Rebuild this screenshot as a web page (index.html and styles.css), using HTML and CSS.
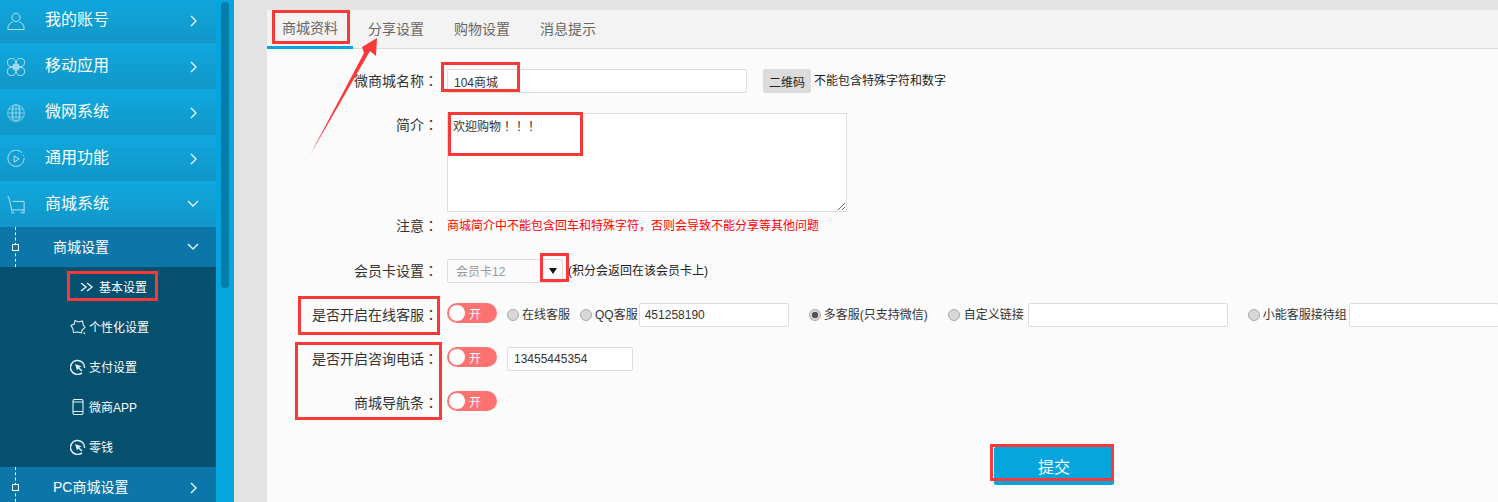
FILE: index.html
```html
<!DOCTYPE html>
<html lang="zh">
<head>
<meta charset="utf-8">
<title>商城设置</title>
<link rel="stylesheet" href="styles.css">
</head>
<body>
<div class="page">
  <aside class="sidebar">
    <nav class="menu">
      <div class="item">
        <svg class="ico" viewBox="0 0 20 20"><circle cx="10" cy="6" r="4.600"/><path d="M1 19.500v-1.500c0-4 3-6.200 5.500-7M19 19.500v-1.500c0-4-3-6.200-5.500-7M1 19.500h18"/></svg>
        <span class="label">我的账号</span>
        <svg class="chev" viewBox="0 0 10 12"><path d="M2 1l5 5-5 5"/></svg>
      </div>
      <div class="item">
        <svg class="ico" viewBox="0 0 20 20"><circle cx="5" cy="5" r="4.500"/><circle cx="15" cy="5" r="4.500"/><circle cx="5" cy="15" r="4.500"/><circle cx="15" cy="15" r="4.500"/><rect class="fillish" x="6.500" y="6.500" width="7" height="7"/></svg>
        <span class="label">移动应用</span>
        <svg class="chev" viewBox="0 0 10 12"><path d="M2 1l5 5-5 5"/></svg>
      </div>
      <div class="item">
        <svg class="ico ico-thin" viewBox="0 0 20 20"><circle cx="10" cy="10" r="9.300"/><ellipse cx="10" cy="10" rx="4.500" ry="9.300"/><path d="M10 1v18M1 10h18M2 5.500h16M2 14.500h16M6.500 1.800v16.400M13.500 1.800v16.400"/></svg>
        <span class="label">微网系统</span>
        <svg class="chev" viewBox="0 0 10 12"><path d="M2 1l5 5-5 5"/></svg>
      </div>
      <div class="item">
        <svg class="ico" viewBox="0 0 20 20"><path d="M16.500 3A9 9 0 1 0 19 9M18.500 6.500l-.5-1"/><path d="M8 6.500v7l5.500-3.500z"/></svg>
        <span class="label">通用功能</span>
        <svg class="chev" viewBox="0 0 10 12"><path d="M2 1l5 5-5 5"/></svg>
      </div>
      <div class="item">
        <svg class="ico" viewBox="0 0 20 20"><path d="M0.500 1h1.500l3.500 16M6 6h13v13M5.500 15.500h13.500M5 19.500l1.500-2 1.500 2M15.500 19.500l1.500-2 1.500 2"/></svg>
        <span class="label">商城系统</span>
        <svg class="chev chev-down" viewBox="0 0 12 10"><path d="M1 2l5 5 5-5"/></svg>
      </div>
      <div class="subhead">
        <span class="tree"><i class="node"></i></span>
        <span class="sub-label">商城设置</span>
        <svg class="chev chev-down" viewBox="0 0 12 10"><path d="M1 2l5 5 5-5"/></svg>
      </div>
      <ul class="subitems">
        <li class="subitem subitem-first">
          <svg class="sico sico-double" viewBox="0 0 14 10"><path d="M1 1l5 4-5 4M7 1l5 4-5 4"/></svg>
          <span>基本设置</span>
        </li>
        <li class="subitem">
          <svg class="sico" viewBox="0 0 16 16"><path d="M5 1.500l3.500 1.500 4-1 .8 4 1.700 2.500-3 2.500-.5 2.800-4-.8-4 .5L2.800 9.500 1 6.500l3.200-1.500zM13.500 13.500l1.500 1.500"/></svg>
          <span>个性化设置</span>
        </li>
        <li class="subitem">
          <svg class="sico sico-bold" viewBox="0 0 16 16"><path d="M12 13.800A7 7 0 1 1 14.500 9"/><path class="solid" d="M5 5l6.500 2.200-2.200 1.200 3.200 3.200-1 1-3.200-3.200-1.200 2.200z"/></svg>
          <span>支付设置</span>
        </li>
        <li class="subitem">
          <svg class="sico" viewBox="0 0 16 16"><rect x="3" y="0.500" width="10" height="15" rx="1.500"/><path d="M3 3h10M3 12.500h10"/></svg>
          <span>微商APP</span>
        </li>
        <li class="subitem">
          <svg class="sico sico-bold" viewBox="0 0 16 16"><path d="M12 13.800A7 7 0 1 1 14.500 9"/><path class="solid" d="M5 5l6.500 2.200-2.200 1.200 3.200 3.200-1 1-3.200-3.200-1.200 2.200z"/></svg>
          <span>零钱</span>
        </li>
      </ul>
      <div class="subhead">
        <span class="tree"><i class="node"></i></span>
        <span class="sub-label">PC商城设置</span>
        <svg class="chev" viewBox="0 0 10 12"><path d="M2 1l5 5-5 5"/></svg>
      </div>
    </nav>
    <div class="rail"><div class="thumb"></div></div>
  </aside>

  <main class="content">
    <div class="panel">
      <div class="tabs">
        <span class="tab tab-active">商城资料</span>
        <span class="tab">分享设置</span>
        <span class="tab">购物设置</span>
        <span class="tab">消息提示</span>
      </div>
      <form class="form">
        <div class="row row-name">
          <label class="flabel">微商城名称<span class="colon" lang="zh-Hant">：</span></label>
          <input class="text text-name" type="text" value="104商城">
          <span class="qr">二维码</span>
          <span class="hint">不能包含特殊字符和数字</span>
        </div>
        <div class="row row-intro">
          <label class="flabel">简介<span class="colon" lang="zh-Hant">：</span></label>
          <textarea class="area" lang="zh-Hant">欢迎购物！！！</textarea>
        </div>
        <div class="row row-note">
          <label class="flabel">注意<span class="colon" lang="zh-Hant">：</span></label>
          <span class="warn">商城简介中不能包含回车和特殊字符，否则会导致不能分享等其他问题</span>
        </div>
        <div class="row row-card">
          <label class="flabel">会员卡设置<span class="colon" lang="zh-Hant">：</span></label>
          <div class="select">会员卡12<span class="caret"></span></div>
          <span class="hint hint-card">(积分会返回在该会员卡上)</span>
        </div>
        <div class="row row-service">
          <label class="flabel">是否开启在线客服<span class="colon" lang="zh-Hant">：</span></label>
          <span class="switch"><i class="knob"></i>开</span>
          <input class="radio r1" type="radio" name="kf"><span class="opt o1">在线客服</span>
          <input class="radio r2" type="radio" name="kf"><span class="opt o2">QQ客服</span>
          <input class="text text-qq" type="text" value="451258190">
          <input class="radio r3" type="radio" name="kf" checked><span class="opt o3">多客服(只支持微信)</span>
          <input class="radio r4" type="radio" name="kf"><span class="opt o4">自定义链接</span>
          <input class="text text-link" type="text">
          <input class="radio r5" type="radio" name="kf"><span class="opt o5">小能客服接待组</span>
          <input class="text text-xn" type="text">
        </div>
        <div class="row row-phone">
          <label class="flabel">是否开启咨询电话<span class="colon" lang="zh-Hant">：</span></label>
          <span class="switch"><i class="knob"></i>开</span>
          <input class="text text-phone" type="text" value="13455445354">
        </div>
        <div class="row row-nav">
          <label class="flabel">商城导航条<span class="colon" lang="zh-Hant">：</span></label>
          <span class="switch"><i class="knob"></i>开</span>
        </div>
        <div class="actions"><button class="submit" type="button">提交</button></div>
      </form>
    </div>
  </main>

  <i class="mark mark-basic"></i>
  <i class="mark mark-tab"></i>
  <i class="mark mark-name"></i>
  <i class="mark mark-intro"></i>
  <i class="mark mark-caret"></i>
  <i class="mark mark-service"></i>
  <i class="mark mark-phone"></i>
  <i class="mark mark-submit"></i>
  <svg class="arrow" viewBox="0 0 1498 502"><polygon points="310,155 364,53 362,47 377,38 376,56 370,51"/></svg>
</div>
</body>
</html>
```
FILE: styles.css
```css
* { box-sizing: border-box; }
html, body { margin: 0; padding: 0; height: 100%; overflow: hidden; }
body { font-family: "Liberation Sans", "Noto Sans CJK SC", sans-serif; font-size: 12px; color: #222; background: #e3e3e3; }
.page { position: relative; display: flex; width: 1498px; height: 502px; overflow: hidden; }

/* sidebar */
.sidebar { display: flex; flex: 0 0 234px; height: 502px; background: #07a5de; }
.menu { flex: 0 0 216px; margin-top: -3px; background: #0c5a7d; }
.item { display: flex; align-items: center; height: 46px; background: linear-gradient(#10a8df, #1196c7); color: #fff; font-size: 16px; }
.ico { flex: 0 0 18px; width: 18px; height: 18px; margin-left: 7px; margin-top: 1px; fill: none; stroke: #b9e3f2; stroke-width: 1.1; }
.ico-thin { stroke-width: 0.7; }
.fillish { fill: #9fd8ec; stroke: none; }
.label { margin-left: 20px; flex: 1; padding-bottom: 4px; }
.chev { flex: 0 0 10px; width: 10px; height: 12px; margin-right: 17px; margin-top: 2px; fill: none; stroke: #eaf7fc; stroke-width: 1.4; }
.chev-down { flex: 0 0 12px; width: 12px; height: 10px; margin-right: 17px; margin-top: 0; }
.subhead { display: flex; align-items: center; height: 40px; background: #0d76a9; color: #fff; font-size: 14px; }
.tree { position: relative; flex: 0 0 53px; align-self: stretch; }
.tree::before { content: ""; position: absolute; left: 15px; top: 0; bottom: 0; border-left: 1px dashed #e6f4fa; }
.node { position: absolute; left: 12px; top: 17px; width: 7px; height: 7px; background: #0d76a9; border: 1px solid #fff; }
.sub-label { flex: 1; padding-bottom: 2px; }
.subitems { list-style: none; margin: 0; padding: 0; background: #05506e; color: #fff; }
.subitem { display: flex; align-items: center; height: 40px; padding-left: 70px; }
.subitem span { margin-left: 3px; padding-bottom: 2px; }
.subitem-first { padding-left: 80px; }
.subitem-first span { margin-left: 5px; }
.sico { flex: 0 0 16px; width: 16px; height: 16px; fill: none; stroke: #e3f1f6; stroke-width: 1.1; }
.sico-bold { stroke-width: 1.5; }
.sico-double { flex: 0 0 14px; width: 14px; height: 10px; stroke-width: 1.5; }
.solid { fill: #e3f1f6; stroke: none; }
.rail { flex: 0 0 18px; padding: 2px 5px 0; }
.thumb { width: 8px; height: 286px; background: #067ea9; border-radius: 4px; }

/* content */
.content { flex: 1; min-width: 0; padding: 10px 0 0 33px; }
.panel { height: 492px; background: #fbfbfb; width: 1300px; }
.tabs { display: flex; height: 39px; background: #f3f3f3; border-bottom: 1px solid #dcdcdc; }
.tab { display: flex; align-items: center; justify-content: center; width: 86px; height: 39px; padding-bottom: 3px; font-size: 14px; color: #666; }
.tab-active { border-bottom: 3px solid #07a5de; }
.form { padding-top: 20px; }
.row { display: flex; align-items: flex-start; height: 24px; margin-top: 20px; }
.row-name { margin-top: 0; }
.row-intro { height: 99px; }
.row-note { height: 18px; margin-top: 5px; line-height: 18px; }
.row-card { margin-top: 24px; }
.flabel { flex: 0 0 171px; margin-top: -1px; margin-right: 9px; text-align: right; font-size: 14px; line-height: 24px; color: #333; }
.colon { font-family: "Noto Sans CJK TC", sans-serif; }
.row-note .flabel { line-height: 18px; }
.text { min-width: 0; height: 24px; padding: 0 5px; border: 1px solid #ddd; border-radius: 2px; background: #fff; font: 12px "Liberation Sans", "Noto Sans CJK SC", sans-serif; color: #333; outline: none; }
.text-name { width: 300px; padding-left: 6px; }
.text-phone { padding-left: 6px; }
.qr { display: flex; align-items: center; justify-content: center; width: 48px; height: 24px; margin-left: 16px; background: #dcdcdc; border-radius: 2px; }
.hint { margin-left: 3px; line-height: 24px; color: #222; }
.area { display: block; width: 400px; height: 99px; padding: 3px 5px; border: 1px solid #ddd; background: #fff; font: 12px "Liberation Sans", "Noto Sans CJK TC", sans-serif; color: #333; outline: none; }
.warn { color: #f00; line-height: 18px; }
.select { position: relative; width: 116px; height: 24px; padding-left: 8px; border: 1px solid #ddd; border-radius: 2px; background: #fbfbfb; line-height: 24px; color: #999; }
.caret { position: absolute; right: 5px; top: 8px; border-style: solid; border-width: 6px 4px 0; border-color: #111 transparent transparent; }
.hint-card { margin-left: 5px; }

.switch { position: relative; display: flex; align-items: center; flex: 0 0 50px; height: 20px; padding-left: 22px; border-radius: 10px; background: #ff7272; color: #fff; font-size: 12px; }
.knob { position: absolute; left: 2px; top: 2px; width: 16px; height: 16px; border-radius: 50%; background: #fff; }

.radio { appearance: none; flex: 0 0 12px; width: 12px; height: 12px; margin: 6px 0 0; border: 1px solid #aaa; border-radius: 50%; background: #d8d8d8; }
.radio:checked { background: radial-gradient(circle, #555 0 3px, #d8d8d8 3.500px); }
.r1 { margin-left: 10px; }
.r2 { margin-left: 10px; }
.r3 { margin-left: 20px; }
.r4 { margin-left: 20px; }
.r5 { margin-left: 20px; }
.opt { line-height: 24px; margin-left: 3px; white-space: nowrap; color: #333; }
.o4 { margin-left: 4px; }
.text-qq { flex: 0 0 150px; width: 150px; margin-left: 1px; }
.text-link { flex: 0 0 200px; width: 200px; margin-left: 4px; }
.text-xn { flex: 0 0 150px; width: 150px; margin-left: 2px; }
.text-phone { width: 126px; margin-left: 10px; }
.actions { margin-top: 32px; padding-left: 727px; }
.submit { display: block; width: 120px; height: 38px; border: 0; border-radius: 2px; background: #07a5de; color: #fff; font: 16px "Liberation Sans", "Noto Sans CJK SC", sans-serif; }

/* red annotations drawn over the page */
.mark { position: absolute; border: 3px solid #f93838; }
.mark-basic { left: 67px; top: 271px; width: 91px; height: 30px; }
.mark-tab { left: 272px; top: 10px; width: 78px; height: 34px; }
.mark-name { left: 441px; top: 62px; width: 79px; height: 30px; }
.mark-intro { left: 448px; top: 112px; width: 135px; height: 44px; }
.mark-caret { left: 540px; top: 253px; width: 29px; height: 29px; }
.mark-service { left: 298px; top: 296px; width: 142px; height: 39px; }
.mark-phone { left: 295px; top: 342px; width: 147px; height: 78px; }
.mark-submit { left: 990px; top: 444px; width: 124px; height: 37px; }
.arrow { position: absolute; left: 0; top: 0; width: 1498px; height: 502px; pointer-events: none; }
.arrow polygon { fill: #f93838; }
```
